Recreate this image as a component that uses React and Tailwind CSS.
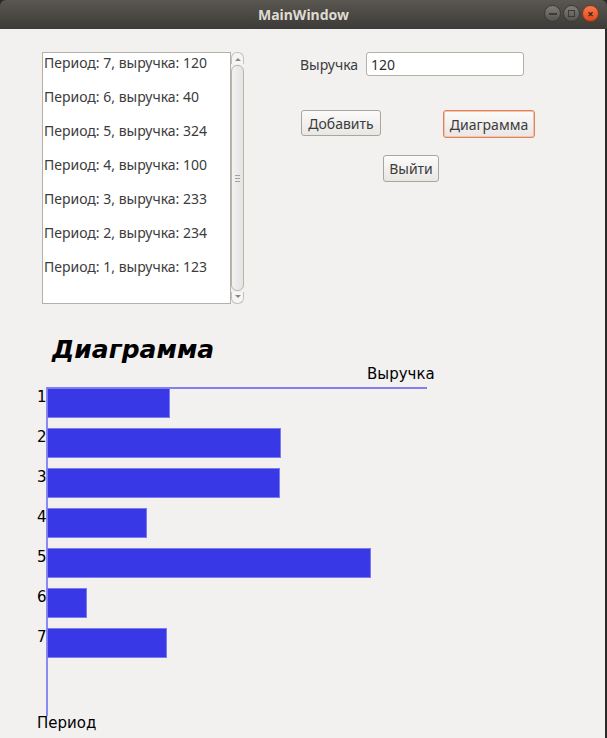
import React from 'react';

const items = [
    [7, 120],
    [6, 40],
    [5, 324],
    [4, 100],
    [3, 233],
    [2, 234],
    [1, 123],
];

const bars = [123, 234, 233, 100, 324, 40, 120];

const ui = { fontFamily: '"Noto Sans", "DejaVu Sans", sans-serif' };
const chartFont = { fontFamily: '"DejaVu Sans", "Noto Sans", sans-serif' };

const TitleBar = () => (
    <div className="h-[29px] flex items-center relative bg-gradient-to-b from-[#5a5751] to-[#3c3b37] rounded-t-[6px]">
        <div className="flex-1 text-center text-[14px] font-bold text-[#dfdbd2]" style={ui}>
            MainWindow
        </div>
        <div className="absolute right-[8px] top-[5px] flex gap-[2px]">
            <div className="w-[17px] h-[17px] rounded-full bg-gradient-to-b from-[#807d78] to-[#56544f] border border-[#3a3935] flex items-center justify-center">
                <div className="w-[8px] h-[2px] bg-[#3c3b37]" />
            </div>
            <div className="w-[17px] h-[17px] rounded-full bg-gradient-to-b from-[#807d78] to-[#56544f] border border-[#3a3935] flex items-center justify-center">
                <div className="w-[7px] h-[7px] border-[1.5px] border-[#3c3b37]" />
            </div>
            <div className="w-[17px] h-[17px] rounded-full bg-gradient-to-b from-[#f57b4e] to-[#de4a1a] border border-[#8e3213] flex items-center justify-center text-[#3c2418] text-[11px] leading-none font-bold" style={ui}>
                ×
            </div>
        </div>
    </div>
);

const ScrollBar = () => (
    <div className="w-[13px] h-full flex flex-col">
        <div className="h-[12px] rounded-t-[6px] border border-b-0 border-[#c4c1bc] bg-[#f6f5f4] flex items-end justify-center pb-[3px]">
            <div className="w-0 h-0 border-l-[3px] border-r-[3px] border-b-[3px] border-l-transparent border-r-transparent border-b-[#8a8782]" />
        </div>
        <div className="flex-1 rounded-[6px] border border-[#b9b6b0] bg-gradient-to-r from-[#f3f2f1] to-[#e6e4e1] flex flex-col items-center justify-center gap-[2px] my-[1px]">
            <div className="w-[5px] h-px bg-[#a5a29d]" />
            <div className="w-[5px] h-px bg-[#a5a29d]" />
            <div className="w-[5px] h-px bg-[#a5a29d]" />
        </div>
        <div className="h-[12px] rounded-b-[6px] border border-t-0 border-[#c4c1bc] bg-[#f6f5f4] flex items-start justify-center pt-[3px]">
            <div className="w-0 h-0 border-l-[3px] border-r-[3px] border-t-[3px] border-l-transparent border-r-transparent border-t-[#8a8782]" />
        </div>
    </div>
);

const Button = ({ children, className = '' }) => (
    <div
        className={`flex items-center justify-center rounded-[3px] border bg-gradient-to-b from-[#fbfbfa] to-[#e9e7e4] text-[14px] text-[#3c3c3c] ${className}`}
        style={ui}
    >
        {children}
    </div>
);

export default function App() {
    return (
        <div className="w-[607px] h-[738px] overflow-hidden bg-[#2b2a27] flex flex-col">
            <TitleBar />
            <div className="flex-1 bg-[#f2f1f0] mr-[2px] flex flex-col overflow-hidden">
                <div className="flex">
                    <div className="ml-[42px] mt-[23px] h-[252px] w-[202px] flex">
                        <div className="w-[189px] h-full bg-white border border-[#b3afa9] flex flex-col">
                            {items.map(([p, v]) => (
                                <div key={p} className="h-[34px] shrink-0 pl-[1px] text-[14px] leading-[19px] text-[#3c3c3c] whitespace-nowrap" style={ui}>
                                    Период: {p}, выручка: {v}
                                </div>
                            ))}
                        </div>
                        <ScrollBar />
                    </div>
                    <div className="ml-[56px] mt-[23px] flex flex-col">
                        <div className="flex items-center h-[24px]">
                            <div className="w-[66px] text-[14px] text-[#3c3c3c]" style={ui}>Выручка</div>
                            <div className="w-[158px] h-[24px] bg-white border border-[#b3afa9] rounded-[3px] flex items-center pl-[4px] text-[14px] text-[#2e2e2e]" style={ui}>
                                120
                            </div>
                        </div>
                        <div className="flex items-start mt-[34px]">
                            <Button className="ml-[1px] w-[80px] h-[26px] border-[#aaa69f]">Добавить</Button>
                            <Button className="ml-[62px] w-[92px] h-[28px] border-[#e2825b] shadow-[inset_0_0_0_1px_#f3c2ad]">Диаграмма</Button>
                        </div>
                        <div className="flex mt-[17px]">
                            <Button className="ml-[83px] w-[56px] h-[27px] border-[#aaa69f]">Выйти</Button>
                        </div>
                    </div>
                </div>

                <div className="mt-[32px] pl-[52px] h-[28px] text-[25px] leading-[28px] font-bold italic text-black" style={chartFont}>
                    Диаграмма
                </div>
                <div className="mt-[1px] pl-[367px] h-[18px] text-[15px] leading-[18px] text-black" style={chartFont}>
                    Выручка
                </div>
                <div className="mt-[4px] ml-[37px] flex">
                    <div className="w-[9px] pt-[1px] flex flex-col">
                        {bars.map((_, i) => (
                            <div key={i} className="h-[40px] text-[15px] leading-[18px] text-black" style={chartFont}>
                                {i + 1}
                            </div>
                        ))}
                    </div>
                    <div className="w-[381px] h-[329px] flex">
                        <div className="w-[2px] h-full bg-[#8a8af0]" />
                        <div className="flex-1 flex flex-col">
                            <div className="h-[2px] -ml-[1px] -mb-[1px] bg-[#8080f0]" />
                            {bars.map((v, i) => (
                                <div
                                    key={i}
                                    className="h-[30px] mb-[10px] -ml-[1px] bg-[#3838e6] border border-[#7b7bef]"
                                    style={{ width: v }}
                                />
                            ))}
                        </div>
                    </div>
                </div>
                <div className="-mt-[2px] ml-[37px] text-[15px] leading-[18px] text-black" style={chartFont}>
                    Период
                </div>
            </div>
        </div>
    );
}
